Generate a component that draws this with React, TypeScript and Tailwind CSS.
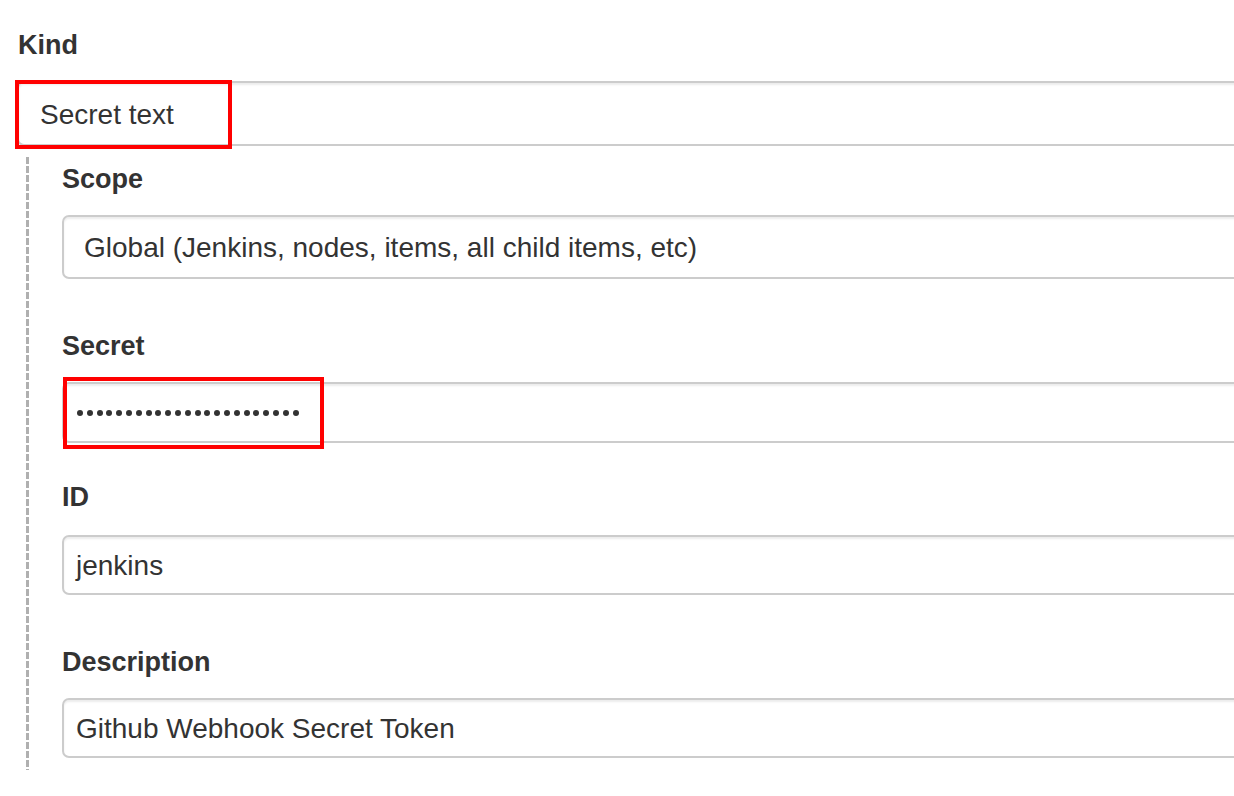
import React from "react";

const inputBase =
  "border-2 border-[#cccccc] rounded-[7px] bg-white shadow-[inset_0_2px_2px_rgba(0,0,0,0.075)] flex items-center text-[28px] leading-none text-[#333333] whitespace-nowrap";

const labelCls = "text-[27px] font-bold leading-[32px] text-[#333333]";

const dots = Array.from({ length: 23 });

export default function App() {
  return (
    <div className="w-[1234px] h-[796px] overflow-hidden bg-white font-['Liberation_Sans',Arial,sans-serif]">
      <div className="w-[1290px] pl-[17px] pt-[29px]">
        <div className={`${labelCls} pl-px`}>Kind</div>
        <div className="relative mt-[20px]">
          <div className={`${inputBase} h-[65px] pl-[21px] pt-[3px]`}>Secret text</div>
          <div className="absolute left-[-2px] top-[-1px] w-[217px] h-[69px] border-[4px] border-[#ff0000]" />
        </div>

        <div className="flex ml-[9px]">
          <div className="w-[3px] mt-[11px] shrink-0 bg-[repeating-linear-gradient(to_bottom,#b0b0b0_0px,#b0b0b0_7px,transparent_7px,transparent_9px)]" />
          <div className="flex-1 pl-[33px] pt-[17px] pb-[12px]">
            <div className={labelCls}>Scope</div>
            <div className={`${inputBase} mt-[20px] h-[64px] pl-[20px] pt-[2px]`}>
              Global (Jenkins, nodes, items, all child items, etc)
            </div>

            <div className={`${labelCls} mt-[51px]`}>Secret</div>
            <div className="relative mt-[20px]">
              <div className={`${inputBase} h-[61px] pl-[13px] gap-[3.8px]`} aria-label="password">
                {dots.map((_, i) => (
                  <span key={i} className="block w-[6px] h-[6px] rounded-full bg-[#333333] shrink-0" />
                ))}
              </div>
              <div className="absolute left-px top-[-5px] w-[261px] h-[72px] border-[4px] border-[#ff0000]" />
            </div>

            <div className={`${labelCls} mt-[38px]`}>ID</div>
            <div className={`${inputBase} mt-[22px] h-[60px] pl-[12px] pt-px`}>jenkins</div>

            <div className={`${labelCls} mt-[51px]`}>Description</div>
            <div className={`${inputBase} mt-[20px] h-[60px] pl-[12px] pt-px`}>
              Github Webhook Secret Token
            </div>
          </div>
        </div>
      </div>
    </div>
  );
}
